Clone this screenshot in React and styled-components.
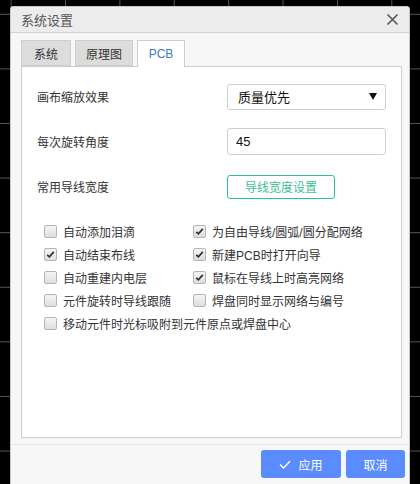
import React from 'react'
import styled, { createGlobalStyle } from 'styled-components'

const GlobalStyle = createGlobalStyle`
    html, body {
        margin: 0;
        padding: 0;
        width: 420px;
        height: 484px;
        overflow: hidden;
    }
    body {
        font-family: "Liberation Sans", "Noto Sans CJK SC", sans-serif;
        background-color: #000;
        background-image:
            linear-gradient(to right, #555 1px, transparent 1px),
            linear-gradient(to bottom, #555 1px, transparent 1px);
        background-size: 54.4px 54.6px;
        background-position: 10.6px 13.8px;
    }
`

const options = [
    ['自动添加泪滴', false],
    ['为自由导线/圆弧/圆分配网络', true],
    ['自动结束布线', true],
    ['新建PCB时打开向导', true],
    ['自动重建内电层', false],
    ['鼠标在导线上时高亮网络', true],
    ['元件旋转时导线跟随', false],
    ['焊盘同时显示网络与编号', false],
    ['移动元件时光标吸附到元件原点或焊盘中心', false, true],
]

function Check({ checked }) {
    return (
        <Box>
            {checked && (
                <svg width="9" height="9" viewBox="0 0 9 9">
                    <path d="M1.2 4.8 L3.4 6.8 L7.8 1.8" stroke="#333" strokeWidth="1.8" fill="none" />
                </svg>
            )}
        </Box>
    )
}

function App() {
    return (
        <>
            <GlobalStyle />
            <Dialog>
                <TitleBar>
                    <Title>系统设置</Title>
                    <Close>
                        <svg width="13" height="13" viewBox="0 0 13 13">
                            <path d="M1.5 1.5 L11.5 11.5 M11.5 1.5 L1.5 11.5" stroke="#555" strokeWidth="1.6" />
                        </svg>
                    </Close>
                </TitleBar>
                <Body>
                    <Tabs>
                        <Tab width={50}>系统</Tab>
                        <Tab width={58}>原理图</Tab>
                        <Tab width={48} active>PCB</Tab>
                    </Tabs>
                    <Panel>
                        <FormRow>
                            <Label>画布缩放效果</Label>
                            <Select>
                                <span>质量优先</span>
                                <svg width="8" height="7" viewBox="0 0 8 7">
                                    <path d="M0 0 H8 L4 7 Z" fill="#111" />
                                </svg>
                            </Select>
                        </FormRow>
                        <FormRow>
                            <Label>每次旋转角度</Label>
                            <Input value="45" readOnly />
                        </FormRow>
                        <FormRow>
                            <Label>常用导线宽度</Label>
                            <GreenButton>导线宽度设置</GreenButton>
                        </FormRow>
                        <CheckGrid>
                            {options.map(([text, checked, wide]) => (
                                <CheckItem key={text} wide={wide}>
                                    <Check checked={checked} />
                                    <span>{text}</span>
                                </CheckItem>
                            ))}
                        </CheckGrid>
                    </Panel>
                </Body>
                <Footer>
                    <Button>
                        <svg width="12" height="9" viewBox="0 0 12 9">
                            <path d="M1 4.5 L4.5 8 L11 1.2" stroke="#fff" strokeWidth="1.4" fill="none" />
                        </svg>
                        应用
                    </Button>
                    <Button narrow>取消</Button>
                </Footer>
            </Dialog>
        </>
    )
}

const Dialog = styled.div`
    position: absolute;
    left: 10px;
    top: 6px;
    width: 398px;
    height: 490px;
    background: #f7f7f7;
    border: 1px solid #c9c9c9;
    border-radius: 3px;
    display: flex;
    flex-direction: column;
    overflow: hidden;
`

const TitleBar = styled.div`
    height: 25px;
    background: #ececec;
    border-bottom: 1px solid #d2d2d2;
    display: flex;
    align-items: center;
    justify-content: space-between;
    padding: 0 10px 0 10px;
    flex-shrink: 0;
`

const Title = styled.div`
    font-size: 13px;
    color: #555;
`

const Close = styled.div`
    display: flex;
    align-items: center;
`

const Body = styled.div`
    padding: 7px 7px 0 10px;
    display: flex;
    flex-direction: column;
`

const Tabs = styled.div`
    display: flex;
    gap: 4px;
    height: 26px;
`

const Tab = styled.div`
    box-sizing: border-box;
    width: ${p => p.width}px;
    height: ${p => (p.active ? '27px' : '26px')};
    display: flex;
    align-items: center;
    justify-content: center;
    font-size: 12px;
    color: ${p => (p.active ? '#3c79c6' : '#333')};
    background: ${p => (p.active ? '#fff' : '#dcdcdc')};
    border: 1px solid #cdcdcd;
    border-bottom: ${p => (p.active ? 'none' : '1px solid #cdcdcd')};
    position: relative;
    z-index: 1;
`

const Panel = styled.div`
    height: 372px;
    box-sizing: border-box;
    background: #fff;
    border: 1px solid #cdcdcd;
    padding: 7px 15px 0 15px;
`

const FormRow = styled.div`
    height: 45px;
    display: flex;
    align-items: center;
    justify-content: space-between;
`

const Label = styled.div`
    font-size: 12px;
    color: #333;
`

const Select = styled.div`
    width: 159px;
    height: 26px;
    box-sizing: border-box;
    border: 1px solid #cfcfcf;
    border-radius: 3px;
    display: flex;
    align-items: center;
    justify-content: space-between;
    padding: 0 8px 0 10px;
    font-size: 13px;
    color: #111;
`

const Input = styled.input`
    width: 159px;
    height: 27px;
    box-sizing: border-box;
    border: 1px solid #cfcfcf;
    border-radius: 3px;
    padding: 0 8px;
    font-family: inherit;
    font-size: 13px;
    color: #111;
    outline: none;
`

const GreenButton = styled.div`
    width: 108px;
    height: 24px;
    margin-right: 51px;
    box-sizing: border-box;
    border: 1px solid #2cbf97;
    border-radius: 3px;
    display: flex;
    align-items: center;
    justify-content: center;
    font-size: 12px;
    color: #3dbd98;
`

const CheckGrid = styled.div`
    margin-top: 11px;
    padding-left: 7px;
    display: grid;
    grid-template-columns: 149px 1fr;
    grid-auto-rows: 23px;
`

const CheckItem = styled.div`
    display: flex;
    align-items: center;
    gap: 6px;
    font-size: 12px;
    color: #333;
    grid-column: ${p => (p.wide ? 'span 2' : 'auto')};
`

const Box = styled.div`
    width: 13px;
    height: 13px;
    box-sizing: border-box;
    border: 1px solid #b4b4b4;
    border-radius: 2px;
    background: linear-gradient(#f4f4f4, #dedede);
    display: flex;
    align-items: center;
    justify-content: center;
`

const Footer = styled.div`
    margin-top: 6px;
    border-top: 1px solid #e4e4e4;
    padding: 5px 4px 0 0;
    display: flex;
    justify-content: flex-end;
    gap: 5px;
`

const Button = styled.div`
    width: ${p => (p.narrow ? '59px' : '80px')};
    height: 28px;
    border-radius: 3px;
    background: #5a8cff;
    color: #fff;
    font-size: 12px;
    display: flex;
    align-items: center;
    justify-content: center;
    gap: 7px;
`

export default App
